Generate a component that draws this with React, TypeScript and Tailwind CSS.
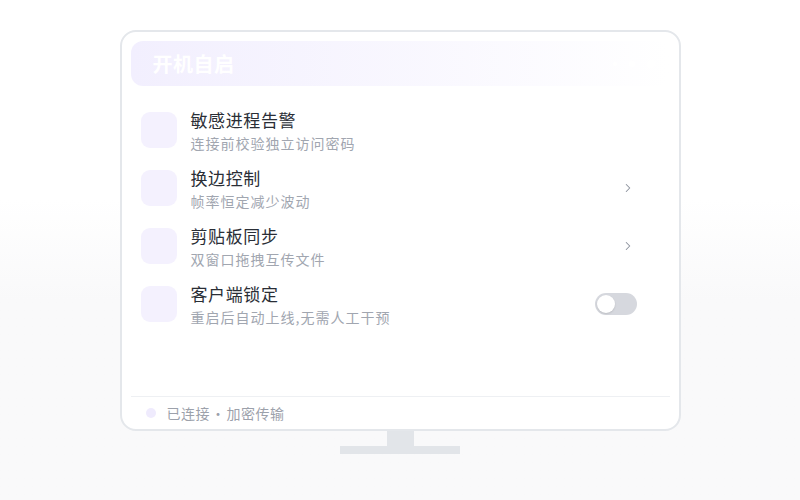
import { ChevronRight } from 'lucide-react'

interface Item {
  id: string
  title: string
  desc: string
  action: 'none' | 'chevron' | 'toggle'
}

const items: Item[] = [
  { id: 'alert', title: '敏感进程告警', desc: '连接前校验独立访问密码', action: 'none' },
  { id: 'switch', title: '换边控制', desc: '帧率恒定减少波动', action: 'chevron' },
  { id: 'clip', title: '剪贴板同步', desc: '双窗口拖拽互传文件', action: 'chevron' },
  { id: 'lock', title: '客户端锁定', desc: '重启后自动上线,无需人工干预', action: 'toggle' },
]

export default function App() {
  return (
    <div
      className="h-[500px] w-[800px] flex flex-col items-center pt-[30px] bg-gradient-to-b from-white from-40% to-[#f9f9fa] to-60%"
      style={{ fontFamily: '"Noto Sans CJK SC", "Noto Sans", sans-serif' }}
    >
      <div className="w-[561px] h-[401px] border-2 border-[#e4e7eb] rounded-[16px] bg-white flex flex-col p-[9px] pb-0">
        <div className="h-[45px] w-[538px] rounded-[12px] bg-gradient-to-r from-[#f2effe] to-white flex items-center pl-[22px] pr-[14px]">
          <span className="text-white text-[20px] font-bold tracking-[0.5px]">开机自启</span>
          <div className="ml-auto flex items-center gap-[12px]">
            <span className="w-[4px] h-[4px] rounded-full bg-white" />
            <span className="w-[6px] h-[6px] rounded-full bg-white" />
            <span className="w-[8px] h-[8px] rounded-full bg-white" />
          </div>
        </div>

        <div className="mt-[15px] flex flex-col">
          {items.map((item) => {
            return (
              <div key={item.id} className="h-[58px] flex items-center pl-[10px] pr-[33px]">
                <div className="w-[36px] h-[36px] rounded-[9px] bg-[#f4f1fe]" />
                <div className="ml-[14px] flex flex-col mt-[2px]">
                  <span className="text-[17px] leading-[22px] text-[#2a2e36] tracking-[0.6px]">
                    {item.title}
                  </span>
                  <span className="text-[14px] leading-[20px] mt-[2px] text-[#a1a6b0] tracking-[1px]">
                    {item.desc}
                  </span>
                </div>
                <div className="ml-auto">
                  {item.action === 'chevron' && (
                    <ChevronRight size={14} strokeWidth={1.8} className="text-[#8b919c] mr-[2px]" />
                  )}
                  {item.action === 'toggle' && (
                    <div className="w-[42px] h-[22px] rounded-full bg-[#d6d8de] flex items-center px-[2px]">
                      <div className="w-[18px] h-[18px] rounded-full bg-white shadow-[0_1px_2px_rgba(0,0,0,0.12)]" />
                    </div>
                  )}
                </div>
              </div>
            )
          })}
        </div>

        <div className="mt-auto border-t border-[#eef0f3] h-[33px] flex items-center pl-[15px]">
          <span className="w-[10px] h-[10px] rounded-full bg-[#efebfd]" />
          <span className="ml-[11px] text-[14px] text-[#9ca1ab] tracking-[0.5px]">
            已连接<span className="mx-[1px]">·</span>加密传输
          </span>
        </div>
      </div>
      <div className="w-[27px] h-[15px] bg-[#e2e5e9]" />
      <div className="w-[120px] h-[8px] bg-[#e2e5e9]" />
    </div>
  )
}
